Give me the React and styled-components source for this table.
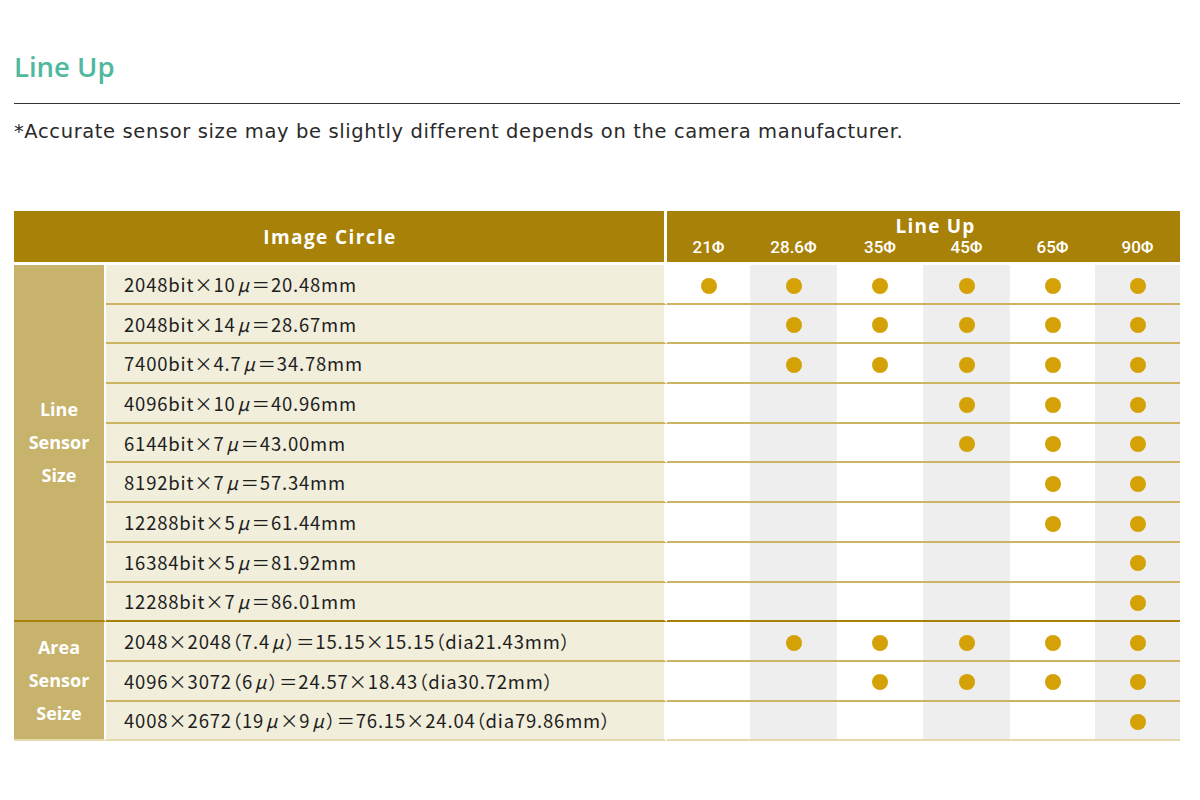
import React from "react";
import styled, { createGlobalStyle } from "styled-components";

const Global = createGlobalStyle`
  html, body { margin: 0; padding: 0; background: #ffffff; }
  body { font-family: "Noto Sans", "Liberation Sans", sans-serif; color: #222; }
`;

const Page = styled.div`
  width: 1166px;
  padding: 51px 20px 40px 14px;
`;

const Title = styled.h2`
  margin: 0;
  font-family: "Open Sans", "Liberation Sans", sans-serif;
  font-weight: 600;
  font-size: 27.5px;
  line-height: 31px;
  color: #4fb89e;
  padding-bottom: 21px;
  border-bottom: 1px solid #333;
`;

const Note = styled.p`
  margin: 16px 0 0;
  font-family: "DejaVu Sans", "Liberation Sans", sans-serif;
  font-size: 19.5px;
  line-height: 24px;
  color: #2a2a2a;
  letter-spacing: 0.62px;
`;

const Table = styled.table`
  margin-top: 67px;
  width: 1166px;
  table-layout: fixed;
  border-collapse: separate;
  border-spacing: 0;
`;

const HeadCell = styled.th`
  background: #a88108;
  color: #fff;
  padding: 0;
  text-align: center;
  font-family: "Open Sans", "Liberation Sans", sans-serif;
  font-weight: 700;
  border-right: ${(p) => (p.$gapRight ? "3px solid #fff" : "none")};
  border-bottom: ${(p) => (p.$bottom ? "3px solid #fff" : "none")};
`;

const MainHead = styled(HeadCell)`
  font-size: 19px;
  letter-spacing: 1.4px;
  height: 51px;
  padding-right: 18px;
`;

const LineUpHead = styled(HeadCell)`
  font-size: 19px;
  letter-spacing: 1.2px;
  height: 26px;
  vertical-align: bottom;
  line-height: 22px;
  padding-left: 24px;
`;

const SizeHead = styled(HeadCell)`
  font-family: "Roboto", "Liberation Sans", sans-serif;
  font-weight: 500;
  font-size: 17px;
  height: 25px;
  line-height: 20px;
  vertical-align: top;
`;

const GroupCell = styled.td`
  background: #c7b36c;
  color: #fff;
  text-align: center;
  font-family: "Open Sans", "Liberation Sans", sans-serif;
  font-weight: 700;
  font-size: 18px;
  line-height: 33px;
  padding: 0;
  border-right: 2px solid #fff;
  border-bottom: 2px solid ${(p) => (p.$last ? "#e5d8aa" : "#a88108")};
`;

const LabelCell = styled.td`
  background: #f2eedc;
  padding: 0 0 0 18px;
  font-family: "Noto Sans CJK JP", "Noto Sans", sans-serif;
  font-size: 18.5px;
  letter-spacing: 0.8px;
  color: #1e1e1e;
  white-space: nowrap;
  height: 37.7px;
  border-right: 3px solid #fff;
  border-bottom: 2px solid ${(p) => p.$line};
`;

const Paren = styled.span`
  font-feature-settings: "palt" 1;
`;

const Mu = styled.span`
  display: inline-block;
  width: 16px;
  text-align: center;
  font-style: italic;
`;

const ValueCell = styled.td`
  background: ${(p) => (p.$gray ? "#eeeeee" : "#ffffff")};
  padding: 0;
  text-align: center;
  vertical-align: middle;
  height: 37.7px;
  border-bottom: 2px solid ${(p) => p.$line};
`;

const Dot = styled.span`
  display: inline-block;
  width: 16px;
  height: 16px;
  border-radius: 50%;
  background: #d4a206;
  vertical-align: middle;
`;

const sizes = ["21Φ", "28.6Φ", "35Φ", "45Φ", "65Φ", "90Φ"];
const widths = [92, 561, 83, 87, 86, 87, 85, 85];

const groups = [
  {
    name: ["Line", "Sensor", "Size"],
    rows: [
      ["2048bit×10μ＝20.48mm", 0],
      ["2048bit×14μ＝28.67mm", 1],
      ["7400bit×4.7μ＝34.78mm", 1],
      ["4096bit×10μ＝40.96mm", 3],
      ["6144bit×7μ＝43.00mm", 3],
      ["8192bit×7μ＝57.34mm", 4],
      ["12288bit×5μ＝61.44mm", 4],
      ["16384bit×5μ＝81.92mm", 5],
      ["12288bit×7μ＝86.01mm", 5],
    ],
  },
  {
    name: ["Area", "Sensor", "Seize"],
    rows: [
      ["2048×2048（7.4μ）＝15.15×15.15（dia21.43mm）", 1],
      ["4096×3072（6μ）＝24.57×18.43（dia30.72mm）", 2],
      ["4008×2672（19μ×9μ）＝76.15×24.04（dia79.86mm）", 5],
    ],
  },
];

function Label({ text }) {
  const tokens = text.split(/(μ|（|）)/).filter(Boolean);
  return tokens.map((t, i) => {
    if (t === "μ") return <Mu key={i}>μ</Mu>;
    if (t === "（" || t === "）") return <Paren key={i}>{t}</Paren>;
    return <React.Fragment key={i}>{t}</React.Fragment>;
  });
}

export default function App() {
  return (
    <Page>
      <Global />
      <Title>Line Up</Title>
      <Note>*Accurate sensor size may be slightly different depends on the camera manufacturer.</Note>
      <Table>
        <colgroup>
          {widths.map((w, i) => (
            <col key={i} style={{ width: w }} />
          ))}
        </colgroup>
        <thead>
          <tr>
            <MainHead colSpan={2} rowSpan={2} $gapRight $bottom>
              Image Circle
            </MainHead>
            <LineUpHead colSpan={6}>Line Up</LineUpHead>
          </tr>
          <tr>
            {sizes.map((s) => (
              <SizeHead key={s} $bottom>
                {s}
              </SizeHead>
            ))}
          </tr>
        </thead>
        <tbody>
          {groups.map((g, gi) =>
            g.rows.map(([label, from], ri) => {
              const lastInGroup = ri === g.rows.length - 1;
              const lastGroup = gi === groups.length - 1;
              const line = lastInGroup
                ? lastGroup
                  ? "#e5d8aa"
                  : "#a88108"
                : "#cdb462";
              return (
                <tr key={label}>
                  {ri === 0 && (
                    <GroupCell rowSpan={g.rows.length} $last={lastGroup}>
                      {g.name.map((n) => (
                        <div key={n}>{n}</div>
                      ))}
                    </GroupCell>
                  )}
                  <LabelCell $line={line}>
                    <Label text={label} />
                  </LabelCell>
                  {sizes.map((s, ci) => (
                    <ValueCell key={s} $gray={ci % 2 === 1} $line={line}>
                      {ci >= from && <Dot />}
                    </ValueCell>
                  ))}
                </tr>
              );
            })
          )}
        </tbody>
      </Table>
    </Page>
  );
}
